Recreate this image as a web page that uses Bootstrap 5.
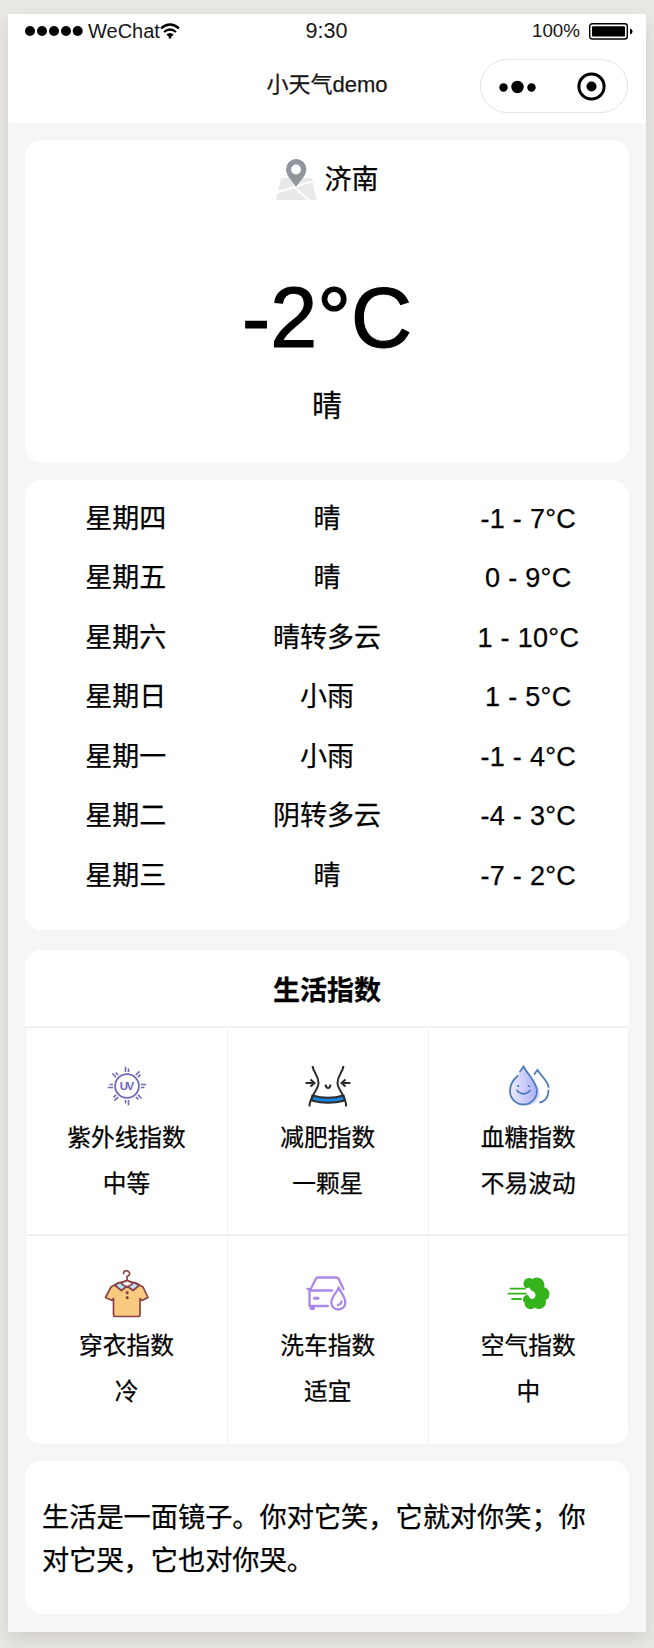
<!DOCTYPE html>
<html lang="zh-CN">
<head>
<meta charset="utf-8">
<meta name="viewport" content="width=device-width, initial-scale=1">
<title>小天气demo</title>
<link rel="stylesheet" href="https://cdn.jsdelivr.net/npm/bootstrap@5.3.0/dist/css/bootstrap.min.css">
<style>
body{font-family:"Liberation Sans","Noto Sans CJK SC",sans-serif;color:#000;background:#eae9e5;line-height:1.5;height:1648px;padding:14px 8px 16px;overflow:hidden}
.phone{height:1618px;background:#f5f7f7;box-shadow:0 8px 18px rgba(70,60,40,.16)}
.topbar{height:109px;color:#161616}
.status{height:34px;padding:0 12px 0 17px}
.status>div{flex:1 1 0}
.carrier{font-size:20px;line-height:34px}
.clock{font-size:21.5px;line-height:34px;padding-right:6px}
.power{font-size:18.8px;line-height:34px}
.titlebar{height:75px}
.apptitle{font-size:22px;line-height:32px;padding-top:21px;-webkit-text-stroke:.25px}
.capsule{right:18px;top:10.5px;width:148px;height:54px;border:1.3px solid #e3e3e3;border-radius:28px}
.panel{background:#fff;border-radius:17px;-webkit-text-stroke:.25px}
.stack{padding:17px 17px 0}
.now{height:323px;margin-bottom:17px}
.place{font-size:27px;line-height:40px;padding-top:18px;gap:8px}
.temp{font-size:84.5px;line-height:98px;margin-top:68px;-webkit-text-stroke:1.2px}
.sky{font-size:30px;line-height:42px;margin-top:18px}
.week{height:450px;margin-bottom:20px;padding-top:9px}
.day{height:59.5px;font-size:27px}
.range{letter-spacing:.3px}
.life{height:494px;margin-bottom:17px;overflow:hidden}
.life h2{font-size:27px;line-height:40px;height:76px;padding-top:21px;margin:0;font-weight:700}
.tiles{display:grid;grid-template-columns:203px 200.5px 200.5px;grid-template-rows:208px 210px;border-top:2px solid #f0f2f2}
.tile{border-right:1.5px solid #f0f2f2;border-bottom:2px solid #f0f2f2;font-size:23.7px;line-height:46px;padding-top:34px}
.tile:nth-child(3n+1){border-left:1.5px solid #f0f2f2}
.tile svg{width:48px;height:48px;display:block;margin:0 auto 5px}
.uv{font:700 11.5px "Liberation Sans",sans-serif}
.quote{height:153px;padding:36px 17px 0;font-size:27.2px;line-height:42.7px}
</style>
</head>
<body>
<main class="phone">
<header class="topbar bg-white">
  <div class="status d-flex align-items-center">
    <div class="carrier d-flex align-items-center">
      <svg class="me-1" width="59" height="12" viewBox="0 0 59 12"><g fill="#000"><circle cx="5" cy="6" r="5"/><circle cx="17" cy="6" r="5"/><circle cx="29" cy="6" r="5"/><circle cx="41" cy="6" r="5"/><circle cx="52.7" cy="6" r="5"/></g></svg><span>WeChat</span>
      <svg width="20" height="16" viewBox="0 0 20 16" fill="none" stroke="#000" stroke-width="2.2"><path d="M1 5.3Q10-2.3 19 5.3M4 9Q10 4 16 9"/><path d="M6.3 11.6Q10 8.6 13.7 11.6L11.2 13.8V15.5H8.8V13.8Z" fill="#000" stroke="none"/></svg>
    </div>
    <div class="clock text-center">9:30</div>
    <div class="power d-flex align-items-center justify-content-end"><span class="me-2">100%</span>
      <svg width="46" height="17" viewBox="0 0 46 17"><rect x="1.700" y=".8" width="37.6" height="15.2" rx="2.5" fill="none" stroke="#000" stroke-width="1.4"/><rect x="4" y="3.2" width="33" height="10.4" rx="1" fill="#000"/><path d="M42 5.5q2.5.6 2.5 3t-2.5 3z" fill="#000"/></svg>
    </div>
  </div>
  <div class="titlebar position-relative text-center">
    <div class="apptitle">小天气demo</div>
    <div class="capsule position-absolute d-flex">
      <svg width="145" height="52" viewBox="0 0 145 52"><circle cx="22.5" cy="27.500" r="4.2"/><circle cx="36.5" cy="27" r="6.2"/><circle cx="50.5" cy="27.500" r="4.2"/><circle cx="110.5" cy="26.5" r="12.6" fill="none" stroke="#000" stroke-width="3"/><circle cx="110.5" cy="26.5" r="5"/></svg>
    </div>
  </div>
</header>
<div class="stack">
  <section class="panel now text-center">
    <div class="place d-flex align-items-center justify-content-center">
      <svg width="41" height="43" viewBox="0 0 41 43"><path d="M5 20H35.500L40.500 42H0Z" fill="#e9e9ea"/><path d="M1 34.500L35.500 23.500M18 29L34 43" stroke="#fff" stroke-width="2" fill="none"/><path d="M20 29C17 23.500 10 18 10 11.200A10.200 10.200 0 0 1 30.400 11.200C30.400 18 23 23.500 20 29Z" fill="#90969e"/><circle cx="20" cy="11.500" r="4.900" fill="#fff"/></svg>
      <span>济南</span>
    </div>
    <div class="temp">-2°C</div>
    <div class="sky">晴</div>
  </section>
  <section class="panel week text-center">
    <div class="row g-0 day align-items-center"><div class="col-4">星期四</div><div class="col-4">晴</div><div class="col-4 range">-1 - 7°C</div></div>
    <div class="row g-0 day align-items-center"><div class="col-4">星期五</div><div class="col-4">晴</div><div class="col-4 range">0 - 9°C</div></div>
    <div class="row g-0 day align-items-center"><div class="col-4">星期六</div><div class="col-4">晴转多云</div><div class="col-4 range">1 - 10°C</div></div>
    <div class="row g-0 day align-items-center"><div class="col-4">星期日</div><div class="col-4">小雨</div><div class="col-4 range">1 - 5°C</div></div>
    <div class="row g-0 day align-items-center"><div class="col-4">星期一</div><div class="col-4">小雨</div><div class="col-4 range">-1 - 4°C</div></div>
    <div class="row g-0 day align-items-center"><div class="col-4">星期二</div><div class="col-4">阴转多云</div><div class="col-4 range">-4 - 3°C</div></div>
    <div class="row g-0 day align-items-center"><div class="col-4">星期三</div><div class="col-4">晴</div><div class="col-4 range">-7 - 2°C</div></div>
  </section>
  <section class="panel life text-center">
    <h2>生活指数</h2>
    <div class="tiles">
      <div class="tile">
        <svg viewBox="0 0 48 48" fill="none" stroke="#6d68b8" stroke-width="1.8"><circle cx="24" cy="24" r="11.900"/><text class="uv" x="24" y="28.200" text-anchor="middle" textLength="14.500" fill="#6d68b8" stroke="none">UV</text><g id="ray" stroke-width="1.600"><path d="M22.500 10V4.800M25.500 10V6.500"/></g><use href="#ray" transform="rotate(45 24 24)"/><use href="#ray" transform="rotate(90 24 24)"/><use href="#ray" transform="rotate(135 24 24)"/><use href="#ray" transform="rotate(180 24 24)"/><use href="#ray" transform="rotate(225 24 24)"/><use href="#ray" transform="rotate(270 24 24)"/><use href="#ray" transform="rotate(315 24 24)"/></svg>
        <div>紫外线指数</div><div>中等</div>
      </div>
      <div class="tile">
        <svg viewBox="0 0 48 48" fill="none" stroke="#302b30" stroke-width="2"><path d="M8.500 33.500Q24 38 39.500 33.500L41 38.500Q24 43 7.500 38.500Z" fill="#1685dc"/><path d="M8.500 4C9.500 11 14.500 13 14.500 21C14.500 28 5 35 5.500 44.500M39.500 4C38.500 11 33.500 13 33.500 21C33.500 28 43 35 42 44.500"/><path d="M1.500 21H10M6.500 17.500L10.500 21L6.500 24.500M46.500 21H38M41.500 17.500L37.500 21L41.500 24.500M21.500 22.500Q22 26 24.200 26Q26 26 26.500 22.500"/></svg>
        <div>减肥指数</div><div>一颗星</div>
      </div>
      <div class="tile">
        <svg viewBox="0 0 48 48" fill="none" stroke="#527dbb" stroke-width="1.800" stroke-linecap="round"><defs><linearGradient id="dropfill"><stop stop-color="#eeeeff"/><stop offset="1" stop-color="#aaaef8"/></linearGradient></defs><path d="M20 10C26 17 36 24 36 33Q34 43 23 43Q12 40 12 32C12 24 17 18 20 10Z" fill="#dddfff" stroke="none"/><path d="M19.500 4.500C24 13 33 20 33 29A13.500 13.500 0 0 1 6 29C6 20 15 13 19.500 4.500Z" fill="url(#dropfill)" stroke="none"/><path d="M16 9.500L19.500 4.500C24 13 33 20 33 29A13.500 13.500 0 0 1 6 29C6 22 10 17 13.500 14"/><path d="M30.500 12L33.500 8C37 14 44 19 44.500 25M44.500 28.500Q44 39 36 40.500"/><path d="M13 28.500Q19.500 35.500 26 28.500"/><path d="M14 24H14.500M24.500 24H25"/></svg>
        <div>血糖指数</div><div>不易波动</div>
      </div>
      <div class="tile">
        <svg viewBox="0 0 48 48" fill="none" stroke="#8b4145" stroke-width="1.700" stroke-linejoin="round" stroke-linecap="round"><path d="M16 12.500L8 17L2.500 27.500L9 30.500L10.500 28.500V44.500Q10.500 46.500 12.500 46.500H35Q37 46.500 37 44.500V28.500L39 30.500L45 27.500L40 17L32 12.500Z" fill="#f8ca80"/><path d="M14.500 13.500L24 10.500L33 13.500L36 15.500L30 20.500L24 16L18.500 20.500L12 15.500Z" fill="#b8e3fb"/><path d="M18 13Q24 20 30 13L24 10.500Z" fill="#fff"/><path d="M20.500 3.500Q21-.2 24.500 1C28 2.500 27 5.500 24 6.500V10.500"/><path d="M24.200 22.500V22.800M24.200 27.500V27.800" stroke-width="3"/></svg>
        <div>穿衣指数</div><div>冷</div>
      </div>
      <div class="tile">
        <svg viewBox="0 0 48 48" fill="none" stroke="#ad87e8" stroke-width="2.300" stroke-linecap="round" stroke-linejoin="round"><path d="M6 20.500L12 8.500Q12.500 7.500 14 7.500H32Q34 7.500 34.500 8.500L39.500 19M5.500 20.500H28M5.500 20.500V36H24M3.500 19H5"/><path d="M7 37.500V38.500H9.500V37.500" stroke-width="3"/><path d="M10.500 28.200H14" stroke-width="3"/><path d="M34.700 17.500C36.500 22.500 41.300 26.500 41.300 32.500A7 7 0 0 1 27.300 32.500C27.300 26.500 33 22.500 34.700 17.500ZM34 35Q37.500 34 37.500 31.500"/></svg>
        <div>洗车指数</div><div>适宜</div>
      </div>
      <div class="tile">
        <svg viewBox="0 0 48 48" fill="#35b31d"><circle cx="25" cy="13.500" r="5.500"/><circle cx="33" cy="15" r="7.500"/><circle cx="38.500" cy="24" r="7"/><circle cx="35" cy="32" r="7"/><circle cx="26.500" cy="33.500" r="5.800"/><circle cx="23.500" cy="29.500" r="4.500"/><circle cx="33" cy="24" r="8"/><path d="M18 19.500L25 17.500L27.500 20.500Q32 22 31.500 26Q30 30.500 26 28L23.500 24.500H18Z" fill="#fff"/><path d="M6.500 18.700H21M4.500 23.700H22M8 29H17" stroke="#35b31d" stroke-width="1.800" stroke-linecap="round"/></svg>
        <div>空气指数</div><div>中</div>
      </div>
    </div>
  </section>
  <section class="panel quote">生活是一面镜子。你对它笑，它就对你笑；你对它哭，它也对你哭。</section>
</div>
</main>
<script src="https://cdn.jsdelivr.net/npm/bootstrap@5.3.0/dist/js/bootstrap.bundle.min.js"></script>
</body>
</html>
